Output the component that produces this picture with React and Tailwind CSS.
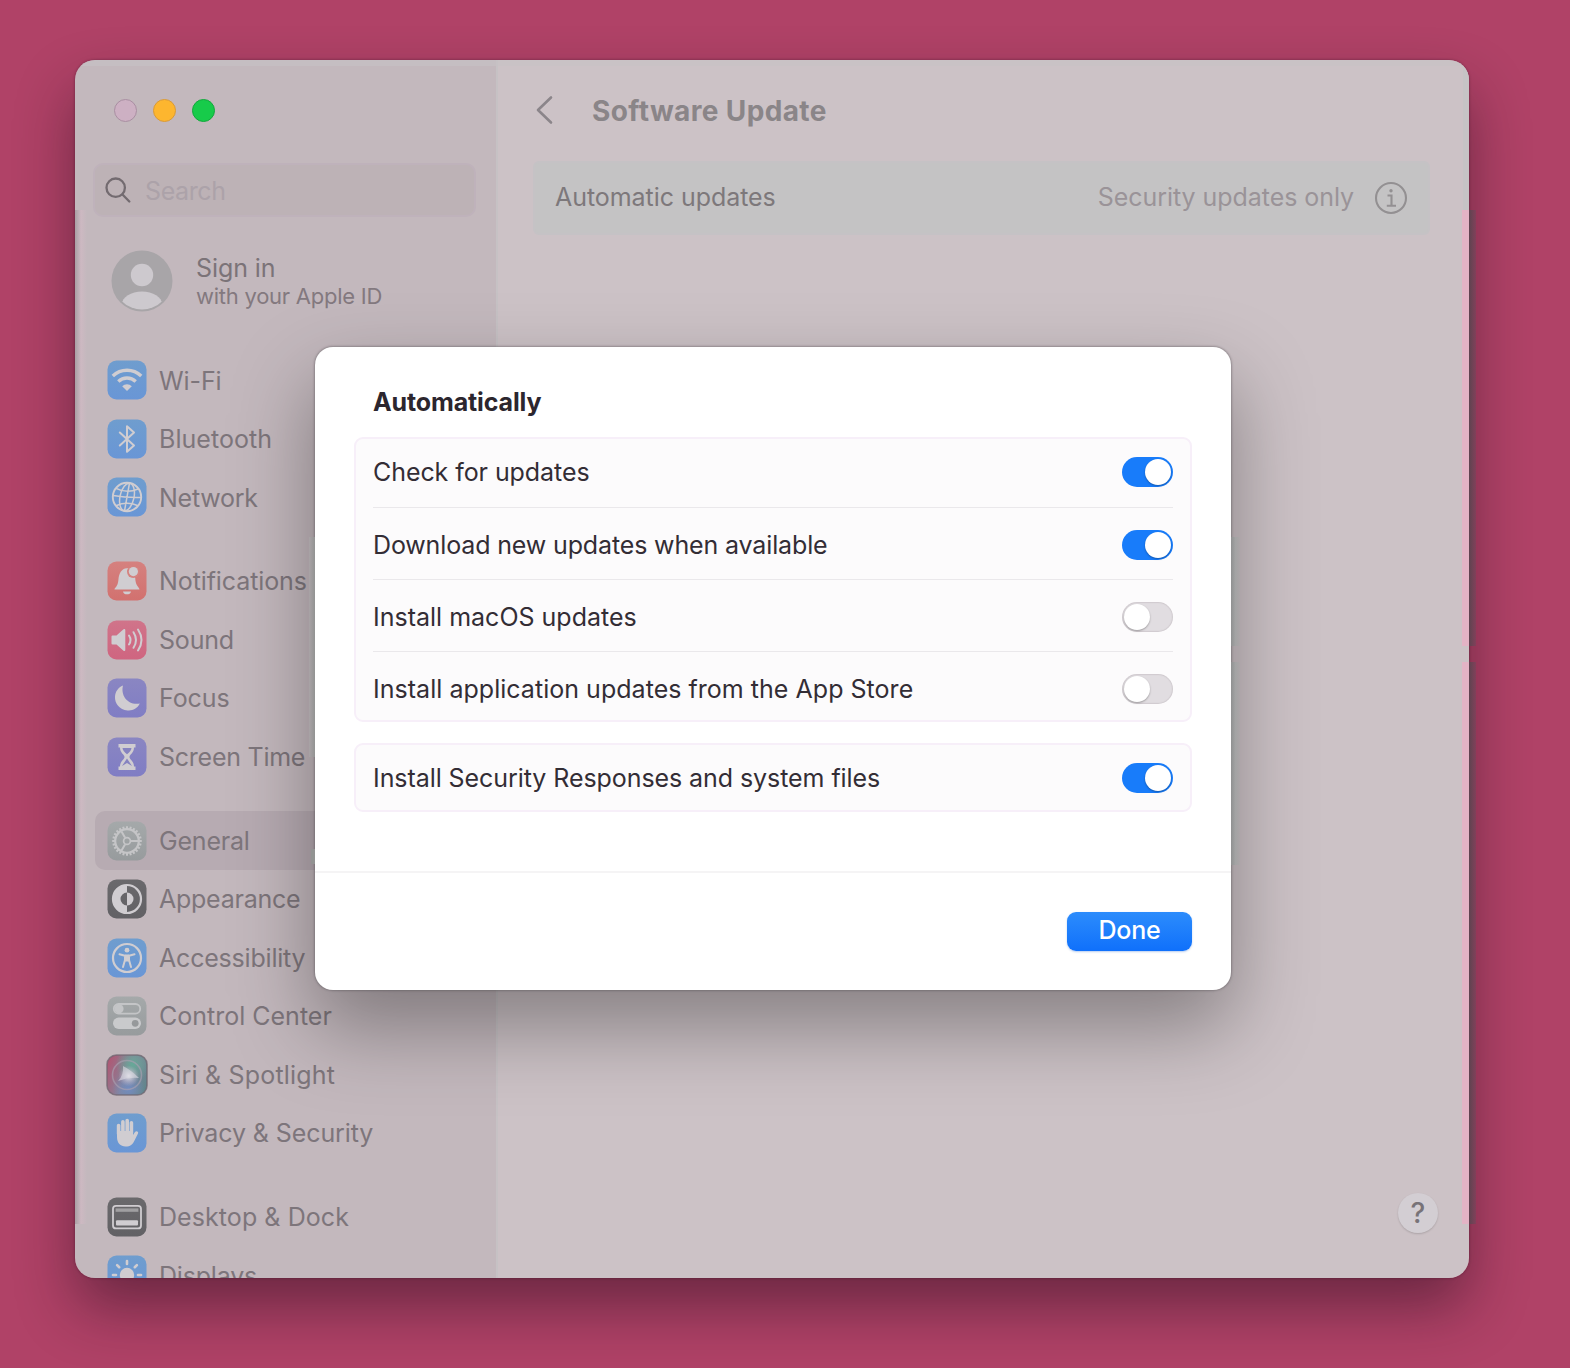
import React from "react";

const LIGHT = "#d0cdd1";

const tile = (fill, children) => (
  <svg viewBox="0 0 40 40" className="h-10 w-10 shrink-0">
    <defs>
      <linearGradient id={"t" + fill[0].slice(1)} x1="0" y1="0" x2="0" y2="1">
        <stop offset="0" stopColor={fill[0]} />
        <stop offset="1" stopColor={fill[1]} />
      </linearGradient>
    </defs>
    <rect x="0.5" y="0.5" width="39" height="39" rx="9" fill={`url(#t${fill[0].slice(1)})`} />
    {children}
  </svg>
);

const BLUE = ["#6f9dce", "#6996d6"];
const RED = ["#d5817f", "#d2716f"];
const PINK = ["#d0748a", "#cf6580"];
const PURPLE = ["#8a86c2", "#807dc4"];
const GRAY = ["#a5a9aa", "#979b9d"];
const DARK = ["#6a696c", "#626165"];

const teeth = Array.from({ length: 24 }, (_, i) => i * 15);
const rays = [-180, -135, -90, -45, 0];

const icons = {
  wifi: tile(BLUE, (
    <g fill="none" stroke={LIGHT} strokeWidth="3.4">
      <path d="M5.8 16 A20.5 20.5 0 0 1 34.2 16" />
      <path d="M11.3 21.5 A12.7 12.7 0 0 1 28.7 21.5" />
      <path d="M20 31 L15.2 26.2 A6.8 6.8 0 0 1 24.8 26.2 Z" fill={LIGHT} stroke="none" />
    </g>
  )),
  bluetooth: tile(BLUE, (
    <path d="M12.8 13.5 L27 26.5 L20 32.8 V7.2 L27 13.5 L12.8 26.5" fill="none" stroke={LIGHT} strokeWidth="2" strokeLinejoin="round" strokeLinecap="round" />
  )),
  network: tile(BLUE, (
    <g fill="none" stroke={LIGHT} strokeWidth="1.5">
      <circle cx="20" cy="20" r="14.2" strokeWidth="1.9" />
      <ellipse cx="20" cy="20" rx="7" ry="14" transform="rotate(12 20 20)" />
      <path d="M22.5 6L17.5 34M6 18.5Q20 21 34 20.5M9 11.3Q20 17 31 12M9 28.7Q20 24 31 28.7" />
    </g>
  )),
  bell: tile(RED, (
    <g>
      <path d="M7.5 28.5 C7.5 26.5 10.8 26 11.4 19 C11.8 12.5 14.5 7.5 19.8 7.2 C22.5 7 24 8 25 9 L28.2 16.8 C28.5 25.5 32.5 26.3 32.5 28.5 Z" fill={LIGHT} />
      <circle cx="26.2" cy="10.8" r="6.2" fill="#d5827f" />
      <circle cx="26.4" cy="10.6" r="4.6" fill={LIGHT} />
      <path d="M16 30.5 H24 C23.5 34.3 16.5 34.3 16 30.5Z" fill={LIGHT} />
    </g>
  )),
  sound: tile(PINK, (
    <g>
      <path d="M4.5 16.5 Q4.5 15.5 5.5 15.5 H9.5 L16.5 9.3 Q18.3 8.2 18.3 10.3 V29.7 Q18.3 31.8 16.5 30.7 L9.5 24.5 H5.5 Q4.5 24.5 4.5 23.5 Z" fill={LIGHT} />
      <path d="M22 15.5 Q25 20 22 24.5 M26.5 12.2 Q31.5 20 26.5 27.8 M31 9.5 Q38 20 31 30.5" fill="none" stroke={LIGHT} strokeWidth="2" strokeLinecap="round" />
    </g>
  )),
  moon: tile(PURPLE, (
    <path d="M16 7.5 C13.5 17 20 27.5 32.8 25.6 C30 31 25.5 33 20.5 32.5 C12.5 31.8 7.5 25.5 8 18.5 C8.4 13.5 11.2 9.5 16 7.5 Z" fill={LIGHT} />
  )),
  hourglass: tile(PURPLE, (
    <g>
      <path d="M11.5 7 H28.5 V10.5 H27 C27 16 22.5 17.5 22.5 20 C22.5 22.5 27 24 27 29.5 H28.5 V33 H11.5 V29.5 H13 C13 24 17.5 22.5 17.5 20 C17.5 17.5 13 16 13 10.5 H11.5 Z" fill={LIGHT} />
      <path d="M15.5 11 H24.5 Q24 14.5 20 17.2 Q16 14.5 15.5 11Z M20 21.5 L25 29 L20 26 L15 29Z" fill="#8683c0" />
    </g>
  )),
  gear: tile(GRAY, (
    <g fill="none" stroke="#c5c5c7">
      <circle cx="20" cy="20" r="11.8" strokeWidth="2.2" />
      {teeth.map((a) => (
        <path key={a} d="M20 5.2V8" strokeWidth="2" transform={`rotate(${a} 20 20)`} />
      ))}
      <circle cx="20" cy="20" r="3.4" strokeWidth="1.7" />
      <path d="M24 20H31M18 16.6L14.5 10.5M18 23.4L14.5 29.5" strokeWidth="2" />
    </g>
  )),
  appearance: tile(DARK, (
    <g>
      <circle cx="20" cy="20" r="14" fill="none" stroke={LIGHT} strokeWidth="2.2" />
      <path d="M20 6 A14 14 0 0 0 20 34 V26.5 A6.5 6.5 0 0 1 20 13.5Z" fill={LIGHT} />
      <path d="M20 13.5 A6.5 6.5 0 0 1 20 26.5Z" fill={LIGHT} />
    </g>
  )),
  accessibility: tile(BLUE, (
    <g>
      <circle cx="20" cy="20" r="14" fill="none" stroke={LIGHT} strokeWidth="2.2" />
      <circle cx="20" cy="12.2" r="2.4" fill={LIGHT} />
      <path d="M12.5 16.3 L18 17.8 V22 L16 29 M27.5 16.3 L22 17.8 V22 L24 29 M18 18H22M18.5 21.5H21.5" fill="none" stroke={LIGHT} strokeWidth="2" strokeLinecap="round" strokeLinejoin="round" />
      <rect x="18" y="16.5" width="4" height="7" fill={LIGHT} />
    </g>
  )),
  control: tile(GRAY, (
    <g>
      <rect x="6.8" y="8" width="26.4" height="9.6" rx="4.8" fill="none" stroke="#c4c5c7" strokeWidth="1.8" />
      <circle cx="12" cy="12.8" r="4.6" fill="#c4c5c7" />
      <rect x="6" y="21.6" width="28" height="11.4" rx="5.7" fill="#c9cacc" />
      <circle cx="28.2" cy="27.3" r="3.4" fill="#96999b" />
    </g>
  )),
  siri: (
    <svg viewBox="0 0 42 42" className="-m-px h-[42px] w-[42px] shrink-0">
      <defs>
        <linearGradient id="siriBase" x1="0" y1="0.3" x2="1" y2="0.7">
          <stop offset="0" stopColor="#ad5a76" />
          <stop offset="0.5" stopColor="#858499" />
          <stop offset="1" stopColor="#62868d" />
        </linearGradient>
        <radialGradient id="siriTeal" cx="0.64" cy="0.24" r="0.42">
          <stop offset="0" stopColor="#66a998" />
          <stop offset="1" stopColor="#66a998" stopOpacity="0" />
        </radialGradient>
        <radialGradient id="siriBlue" cx="0.54" cy="0.84" r="0.4">
          <stop offset="0" stopColor="#728cc0" />
          <stop offset="1" stopColor="#728cc0" stopOpacity="0" />
        </radialGradient>
        <radialGradient id="siriGlow" cx="0.56" cy="0.53" r="0.36">
          <stop offset="0" stopColor="#e4e4ea" />
          <stop offset="1" stopColor="#c9b9cc" stopOpacity="0" />
        </radialGradient>
      </defs>
      <rect x="1" y="1" width="40" height="40" rx="9.5" fill="url(#siriBase)" />
      <rect x="1" y="1" width="40" height="40" rx="9.5" fill="url(#siriTeal)" />
      <rect x="1" y="1" width="40" height="40" rx="9.5" fill="url(#siriBlue)" stroke="#6f6570" strokeOpacity="0.75" strokeWidth="1.6" />
      <circle cx="21" cy="21" r="14.5" fill="url(#siriGlow)" stroke="#a99fb0" strokeOpacity="0.65" strokeWidth="1.6" />
      <path d="M17 12 Q25 16 33 24 Q22 23 12 27 Q18 21 17 12Z" fill="#dcdae2" opacity="0.6" />
    </svg>
  ),
  hand: tile(BLUE, (
    <g fill="none" stroke={LIGHT} strokeLinecap="round" strokeWidth="3.6">
      <path d="M11.6 21V12.5M15.9 20V8.8M20.2 20V7.5M24.4 20V9.8" />
      <path d="M10 18 V24 C10 30 13.5 33.5 18.5 33.5 C23.5 33.5 25.5 31.5 27.5 27.5 L31 20.5 C32 18.2 29 17.3 27.8 19.2 L26 22 V18 Z" fill={LIGHT} stroke="none" />
    </g>
  )),
  dock: tile(DARK, (
    <g>
      <rect x="6" y="8.8" width="28" height="22.6" rx="3" fill="none" stroke={LIGHT} strokeWidth="1.8" />
      <rect x="8.6" y="11.4" width="22.8" height="3.4" fill="#a09fa1" />
      <rect x="9" y="23.2" width="22" height="5.2" rx="1" fill={LIGHT} />
    </g>
  )),
  displays: tile(BLUE, (
    <g>
      <circle cx="20" cy="20" r="7.2" fill={LIGHT} />
      {rays.map((a) => (
        <path key={a} d="M31 20H34" stroke={LIGHT} strokeWidth="2.6" strokeLinecap="round" transform={`rotate(${a} 20 20)`} />
      ))}
    </g>
  )),
};

const groups = [
  [
    ["wifi", "Wi-Fi", "tracking-[-0.1px]"],
    ["bluetooth", "Bluetooth", "tracking-[0.05px]"],
    ["network", "Network", "tracking-[-0.25px]"],
  ],
  [
    ["bell", "Notifications", "tracking-[-0.1px]"],
    ["sound", "Sound", "tracking-[-0.2px]"],
    ["moon", "Focus", "tracking-[-0.1px]"],
    ["hourglass", "Screen Time", "tracking-[-0.25px]"],
  ],
  [
    ["gear", "General", "tracking-[-0.2px]"],
    ["appearance", "Appearance", "tracking-[-0.25px]"],
    ["accessibility", "Accessibility", "tracking-[-0.2px]"],
    ["control", "Control Center", ""],
    ["siri", "Siri & Spotlight", "tracking-[0.2px]"],
    ["hand", "Privacy & Security", "tracking-[-0.1px]"],
  ],
  [
    ["dock", "Desktop & Dock", "tracking-[0.07px]"],
    ["displays", "Displays", "tracking-[-0.2px]"],
  ],
];

function Sidebar() {
  return (
    <aside className="flex h-full w-[421px] shrink-0 flex-col bg-[#c3b8bd] pl-[18px] pr-5">
      <div className="mt-[39px] flex gap-4 pl-[21px]">
        <span className="size-[23px] rounded-full border border-[#a98fa2] bg-[#cdb0c3]" />
        <span className="size-[23px] rounded-full border border-[#d99a38] bg-[#fdb62f]" />
        <span className="size-[23px] rounded-full border border-[#12a83c] bg-[#17cb4a]" />
      </div>
      <div className="mt-[41px] flex h-[54px] shrink-0 items-center rounded-[10px] border-2 border-[#bfb2bb] bg-[#bdb2b6] pl-[10px]">
        <svg viewBox="0 0 26 26" className="size-[26px]" fill="none" stroke="#736b70" strokeWidth="2.3" strokeLinecap="round">
          <circle cx="10.7" cy="10.7" r="9.2" />
          <path d="M17.5 17.5L24.3 24.5" />
        </svg>
        <span className="ml-[14px] pt-[4px] text-[25px] tracking-[-0.4px] text-[#aca2a9]">Search</span>
      </div>
      <div className="mt-[33px] flex h-[61px] shrink-0 pl-[18px]">
        <svg viewBox="0 0 62 62" className="size-[62px]">
          <defs>
            <clipPath id="avatarClip"><circle cx="31" cy="31" r="28.5" /></clipPath>
          </defs>
          <circle cx="31" cy="31" r="30.5" fill="#a8a5a8" />
          <g fill="#cdc9ce" clipPath="url(#avatarClip)">
            <circle cx="31" cy="25" r="11.2" />
            <ellipse cx="31" cy="54" rx="20" ry="12.5" />
          </g>
        </svg>
        <div className="ml-[23px] flex flex-col text-[#7b7378]">
          <span className="mt-[2px] text-[25px] leading-[32px] tracking-[-0.1px]">Sign in</span>
          <span className="text-[22px] leading-[25px] tracking-[-0.25px] text-[#83797f]">with your Apple ID</span>
        </div>
      </div>
      <nav className="mt-[40px] flex flex-col gap-[25.4px]">
        {groups.map((items, g) => (
          <div key={g}>
            {items.map(([id, label, spacing]) => (
              <div
                key={id}
                className={
                  "ml-[2px] flex h-[58.5px] items-center rounded-[10px] pl-3 text-[25px] text-[#7d757b] " +
                  (id === "gear" ? "bg-[#b7abb2] " : "") + spacing
                }
              >
                {icons[id]}
                <span className="ml-3 whitespace-nowrap pt-[2px]">{label}</span>
              </div>
            ))}
          </div>
        ))}
      </nav>
    </aside>
  );
}

function Content() {
  return (
    <main className="flex h-full min-w-0 flex-1 flex-col border-l-2 border-[#c6c1c4] bg-[#ccc2c6] pb-[45px] pl-[35px] pr-[39px]">
      <div className="mt-[31px] flex h-10 items-center">
        <svg viewBox="0 0 18 30" className="ml-[2px] mt-[-2px] h-[30px] w-[18px]" fill="none" stroke="#8b858a" strokeWidth="2.6" strokeLinecap="round" strokeLinejoin="round">
          <path d="M16 2.5L3 15L16 27.5" />
        </svg>
        <h1 className="ml-[39px] text-[28px] font-bold tracking-[0.38px] text-[#8a8588]">Software Update</h1>
      </div>
      <div className="mt-[30px] flex h-[74px] items-center rounded-[6px] border-2 border-[#c5c2c5] bg-[#c4c3c4] pl-[20px] pr-[20px] text-[25px]">
        <span className="tracking-[-0.05px] text-[#7d787b]">Automatic updates</span>
        <span className="ml-auto tracking-[-0.06px] text-[#9a9398]">Security updates only</span>
        <svg viewBox="0 0 34 34" className="ml-[20px] size-[34px]" fill="none" stroke="#939092" strokeWidth="2.1">
          <circle cx="17" cy="17" r="15" />
          <path d="M13.5 14.5H17.5V24.5M12.8 24.7H22" />
          <circle cx="17" cy="9.7" r="1.7" fill="#939092" stroke="none" />
        </svg>
      </div>
      <div className="mr-[-8px] mt-auto flex size-10 items-center justify-center self-end rounded-full bg-[#d3ced3] text-[28px] font-medium text-[#787378] shadow-[0_1px_2px_rgba(0,0,0,0.16)]">
        ?
      </div>
    </main>
  );
}

function Toggle({ on }) {
  return (
    <span
      className={
        "flex h-[30px] w-[51px] items-center rounded-full px-[2px] " +
        (on ? "justify-end bg-[#187cfa]" : "justify-start bg-[#e1dde1] shadow-[inset_0_0_1px_1px_rgba(120,105,115,0.16)]")
      }
    >
      <span className="size-[26px] rounded-full bg-white shadow-[0_1px_2px_rgba(0,0,0,0.3)]" />
    </span>
  );
}

const options = [
  ["Check for updates", true, "tracking-[-0.07px]"],
  ["Download new updates when available", true, "tracking-[-0.14px]"],
  ["Install macOS updates", false, ""],
  ["Install application updates from the App Store", false, "tracking-[0.03px]"],
];

function Dialog() {
  return (
    <section className="absolute left-[240px] top-[287px] flex h-[643px] w-[916px] flex-col rounded-[18px] bg-white text-[25px] text-[#332d35] shadow-[0_0_2px_1px_rgba(80,75,80,0.4),0_36px_80px_2px_rgba(0,0,0,0.34)]">
      <h2 className="ml-[58px] mt-[35px] h-[40px] text-[25px] font-bold leading-[40px] tracking-[-0.13px] text-[#2c262e]">Automatically</h2>
      <div className="mx-[39px] mt-[15px] h-[285px] rounded-[9px] border-2 border-[#f7eff9] bg-[#fcfbfc] px-[17px]">
        {options.map(([label, on, spacing], i) => (
          <div
            key={label}
            className={
              "flex items-center justify-between " +
              (i === 0 ? "h-[68px] pb-[2px] " : "h-[72px] border-t border-[#eae8eb] pt-[2px] ") + spacing
            }
          >
            <span className="whitespace-nowrap pt-[2px]">{label}</span>
            <Toggle on={on} />
          </div>
        ))}
      </div>
      <div className="mx-[39px] mt-[21px] flex h-[69px] items-center justify-between rounded-[9px] border-2 border-[#f7eff9] bg-[#fcfbfc] px-[17px]">
        <span className="whitespace-nowrap pt-[2px] tracking-[-0.07px]">Install Security Responses and system files</span>
        <Toggle on />
      </div>
      <div className="mt-[59px] flex flex-1 justify-end border-t-2 border-[#f5f4f5] pr-[39px] pt-[39px]">
        <button className="h-[39px] w-[125px] rounded-[9px] bg-gradient-to-b from-[#2c8cfc] to-[#0f70fb] pb-[3px] text-[25px] font-medium leading-[35px] tracking-[-0.2px] text-white shadow-[0_1px_2px_rgba(20,90,200,0.3)]">
          Done
        </button>
      </div>
      <div className="absolute left-[-6px] top-[190px] h-[220px] w-[6px] bg-gradient-to-r from-[#a9a3a6] to-[#929392]" />
      <div className="absolute left-[-4px] top-[502px] h-[15px] w-[4px] bg-[#929392]" />
      <div className="absolute left-[916px] top-[190px] h-[109px] w-[9px] bg-gradient-to-r from-[#8f9191] via-[#a3a4a4] to-[#a9a7a8]/40" />
      <div className="absolute left-[916px] top-[315px] h-[203px] w-[9px] bg-gradient-to-r from-[#8f9191] via-[#a3a4a4] to-[#a9a7a8]/40" />
    </section>
  );
}

export default function App() {
  return (
    <div className="h-[1368px] w-[1570px] overflow-hidden bg-[#b04267] pl-[75px] pt-[60px] font-['Inter',sans-serif]">
      <div className="relative h-[1218px] w-[1394px] rounded-[20px] shadow-[0_0_2px_1px_rgba(60,20,40,0.25),0_30px_60px_-2px_rgba(30,10,25,0.48)]">
        <div className="relative flex h-full w-full overflow-hidden rounded-[20px]">
          <Sidebar />
          <Content />
          <Dialog />
          <div className="absolute left-0 top-0 h-[6px] w-full bg-[#c6c1c4]/60" />
          <div className="absolute left-0 top-[150px] h-[1014px] w-[12px] bg-gradient-to-r from-[#a99fa4] via-[#cdb9c2] to-[#c3b8bd]" />
          <div className="absolute right-0 top-0 h-[150px] w-[6px] bg-[#c6c3c5]" />
          <div className="absolute right-0 top-[150px] h-[436px] w-[7px] bg-[#e3b3c5]" />
          <div className="absolute right-0 top-[602px] h-[562px] w-[7px] bg-[#e3b3c5]" />
        </div>
        <div className="absolute left-full top-[150px] h-[436px] w-[7px] bg-gradient-to-r from-[#5e4350] to-[#81405a]" />
        <div className="absolute left-full top-[602px] h-[562px] w-[7px] bg-gradient-to-r from-[#5e4350] to-[#81405a]" />
      </div>
    </div>
  );
}
